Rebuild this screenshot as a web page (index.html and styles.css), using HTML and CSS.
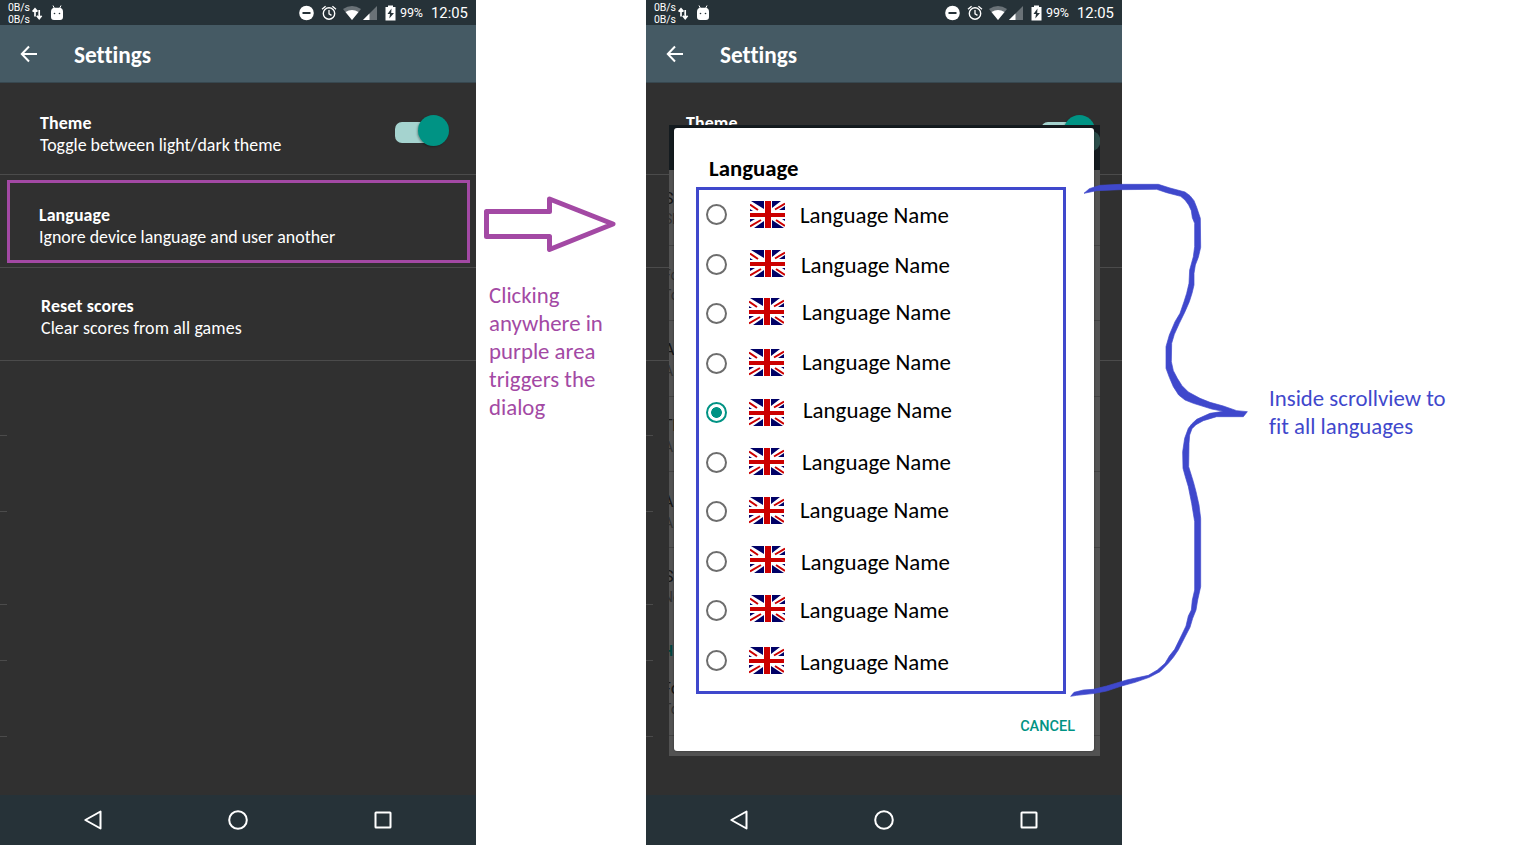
FILE: index.html
```html
<!DOCTYPE html>
<html lang="en">
<head>
<meta charset="utf-8">
<title>Settings – language dialog</title>
<link rel="stylesheet" href="styles.css">
</head>
<body>
<svg class="defs" width="0" height="0" aria-hidden="true">
  <symbol id="left-icons" viewBox="0 0 34 22">
    <path d="M3 14.500V7M.6 9.600L3 6.800l2.400 2.800M7.200 8v8M4.800 13.800l2.400 2.800 2.400-2.800" fill="none" stroke="#fff" stroke-width="1.700"/>
    <path d="M19 9.600h12v5.400q0 3-3 3h-6q-3 0-3-3zM19 9.800q0-4 4-4h4q4 0 4 4z" fill="#fff"/>
    <path d="M21 3.500l1.500 3M29 3.500l-1.500 3" stroke="#fff"/>
    <circle cx="22.500" cy="11.500" r=".8" fill="#263238"/><circle cx="27.500" cy="11.500" r=".8" fill="#263238"/>
  </symbol>
  <symbol id="right-icons" viewBox="0 0 98 18">
    <circle cx="7.500" cy="9" r="7.300" fill="#fff"/><path d="M3.500 9h8" stroke="#263238" stroke-width="2"/>
    <circle cx="30" cy="9.500" r="5.700" fill="none" stroke="#fff" stroke-width="1.400"/>
    <path d="M30 6v3.800l2.500 1.600M23 5.200l3.600-3M37 5.200l-3.600-3" fill="none" stroke="#fff" stroke-width="1.300"/>
    <path d="M44 5q9-6 18 0l-9 11z" fill="#6a7277"/><path d="M46.500 8q6.500-4 13 0L53 16z" fill="#fff"/>
    <path d="M64 16L78 2v14z" fill="#6a7277"/><path d="M64 16l6.500-6.500V16z" fill="#fff"/>
    <path d="M86.500 3h2.500V1.500h5V3h2.500v13.500h-10z" fill="#fff"/><path d="M92.500 4.500L88.500 10h2.500l-.7 4.500L95 9h-2.800z" fill="#263238"/>
  </symbol>
  <symbol id="back" viewBox="0 0 18 18"><path d="M17 9H2M9 1.500L1.800 9 9 16.500" fill="none" stroke="#fff" stroke-width="2"/></symbol>
  <symbol id="nav-back" viewBox="0 0 20 20"><path d="M17.500 1.500v17L2.300 10z" fill="none" stroke="#fff" stroke-width="2" stroke-linejoin="round"/></symbol>
  <symbol id="nav-home" viewBox="0 0 20 20"><circle cx="10" cy="10" r="8.800" fill="none" stroke="#fff" stroke-width="2"/></symbol>
  <symbol id="nav-recent" viewBox="0 0 20 20"><rect x="2.500" y="2.500" width="15" height="15" rx=".5" fill="none" stroke="#fff" stroke-width="2"/></symbol>
  <symbol id="ticks" viewBox="0 0 8 434"><path d="M0 74.500h7M0 150.500h7M0 243.500h7M0 299.500h7M0 375.500h7" stroke="#4b4b4b"/></symbol>
  <symbol id="flag" viewBox="0 0 35 27">
    <path d="M0 0h35v27H0z" fill="#fff"/>
    <path d="M1 0h13v8zM22 0h9l-9 7zM35 5v4h-6zM0 18v3l5-3zM4 27l10-7v7zM22 19l12 8H22zM0 8v2h3zM35 18v2l-3-2z" fill="#006"/>
    <path d="M0 3.500l8 5.500M35 2.500L25 8.500M0 25.500l11-6.500M35 25l-9-6" stroke="#c00" stroke-width="2"/>
    <path d="M18 0v27" stroke="#c00" stroke-width="6"/><path d="M0 14h35" stroke="#c00" stroke-width="4"/>
  </symbol>
</svg>

<main class="board">
  <section class="phone">
    <header class="status">
      <div class="rate">0B/s<br>0B/s</div>
      <svg class="left-icons"><use href="#left-icons"/></svg>
      <svg class="right-icons"><use href="#right-icons"/></svg>
      <span class="battery">99%</span><span class="clock">12:05</span>
    </header>
    <div class="appbar"><svg class="back"><use href="#back"/></svg><h1>Settings</h1></div>
    <div class="list">
      <div class="row first"><div><b>Theme</b><p>Toggle between light/dark theme</p></div><i class="switch"></i></div>
      <div class="row second"><div><b>Language</b><p>Ignore device language and user another</p></div><span class="highlight"></span></div>
      <div class="row third"><div><b>Reset scores</b><p>Clear scores from all games</p></div></div>
      <svg class="ticks"><use href="#ticks"/></svg>
    </div>
    <nav class="navbar"><svg><use href="#nav-back"/></svg><svg><use href="#nav-home"/></svg><svg><use href="#nav-recent"/></svg></nav>
  </section>

  <aside class="step">
    <svg class="arrow" viewBox="0 0 140 60"><path d="M10.500 18.500h63V6L137 31 73.500 56.500v-13h-63z" fill="none" stroke="#a349a4" stroke-width="5" stroke-linejoin="round"/></svg>
    <p>Clicking<br>anywhere in<br>purple area<br>triggers the<br>dialog</p>
  </aside>

  <section class="phone">
    <header class="status">
      <div class="rate">0B/s<br>0B/s</div>
      <svg class="left-icons"><use href="#left-icons"/></svg>
      <svg class="right-icons"><use href="#right-icons"/></svg>
      <span class="battery">99%</span><span class="clock">12:05</span>
    </header>
    <div class="appbar"><svg class="back"><use href="#back"/></svg><h1>Settings</h1></div>
    <div class="list">
      <div class="row first"><div><b>Theme</b></div><i class="switch"></i></div>
      <div class="row second"></div>
      <div class="row third"></div>
      <svg class="ticks"><use href="#ticks"/></svg>
    </div>
    <nav class="navbar"><svg><use href="#nav-back"/></svg><svg><use href="#nav-home"/></svg><svg><use href="#nav-recent"/></svg></nav>

    <div class="shade">
      <svg class="behind" viewBox="0 0 431 631">
        <path d="M0 0h431v45H0z" fill="#141b1f"/>
        <circle cx="421" cy="16" r="10.500" fill="#2b4d4a"/>
        <path d="M0 120.500h431M0 195.500h431M0 271.500h431M0 346.500h431M0 422.500h431M0 610.500h431" stroke="#424242"/>
        <g class="ghost">
          <text x="-5" y="79">S</text><text class="dim" x="-5" y="99">Sh</text>
          <text class="dim" x="-6" y="155">Fo</text><text class="dim" x="-6" y="175">To</text>
          <text x="-5" y="230">A</text><text class="dim" x="-5" y="251">Al</text>
          <text x="-6" y="306">Th</text><text class="dim" x="-5" y="327">Al</text>
          <text x="-6" y="382">A</text><text class="dim" x="-5" y="403">Al</text>
          <text x="-5" y="457">S</text><text class="dim" x="-6" y="477">No</text>
          <text class="teal" x="-6" y="531">H</text>
          <text x="-7" y="569">Fo</text><text class="dim" x="-6" y="589">To</text>
        </g>
      </svg>
      <div class="dialog">
        <h2>Language</h2>
        <ul class="languages">
          <li><i class="radio"></i><svg><use href="#flag"/></svg><span>Language Name</span></li>
          <li><i class="radio"></i><svg><use href="#flag"/></svg><span>Language Name</span></li>
          <li><i class="radio"></i><svg><use href="#flag"/></svg><span>Language Name</span></li>
          <li><i class="radio"></i><svg><use href="#flag"/></svg><span>Language Name</span></li>
          <li><i class="radio on"></i><svg><use href="#flag"/></svg><span>Language Name</span></li>
          <li><i class="radio"></i><svg><use href="#flag"/></svg><span>Language Name</span></li>
          <li><i class="radio"></i><svg><use href="#flag"/></svg><span>Language Name</span></li>
          <li><i class="radio"></i><svg><use href="#flag"/></svg><span>Language Name</span></li>
          <li><i class="radio"></i><svg><use href="#flag"/></svg><span>Language Name</span></li>
          <li><i class="radio"></i><svg><use href="#flag"/></svg><span>Language Name</span></li>
        </ul>
        <button class="cancel">CANCEL</button>
      </div>
    </div>
  </section>

  <aside class="note">Inside scrollview to<br>fit all languages</aside>

  <svg class="brace" viewBox="0 0 600 1620"><path fill="#3f48cc" stroke="#3f48cc" stroke-width="2" stroke-linejoin="round" d="M72 70L88 56 120 46 180 43 295 43 330 54 375 66 390 77 402 92 410 112 421 145 422 232 415 262 406 285 402 310 402 345 396 370 388 395 375 425 358 460 343 493 335 520 334 575 340 602 352 625 366 647 385 666 420 685 450 697 490 708 530 722 562 725 550 740 470 740 430 752 408 764 396 776 389 795 387 820 386 890 400 935 408 965 417 1005 422 1045 422 1250 413 1290 408 1320 398 1345 390 1372 378 1395 355 1440 340 1462 325 1480 300 1505 268 1522 225 1537 185 1548 140 1563 105 1570 50 1576 32 1579 42 1567 70 1560 100 1558 140 1548 200 1530 265 1516 292 1500 315 1480 328 1458 344 1438 365 1395 378 1368 385 1338 394 1320 397 1290 404 1260 404 1055 395 1000 385 950 376 920 369 895 368 845 374 805 385 775 395 762 410 748 450 730 490 724 455 717 400 700 375 690 356 675 340 650 328 622 318 595 318 530 328 495 345 455 360 430 372 395 380 370 387 340 389 300 400 260 404 230 404 160 397 143 394 122 386 105 375 90 362 79 320 68 290 58 180 59 110 62z"/></svg>
</main>
</body>
</html>
```

FILE: styles.css
```css
* { box-sizing: border-box; }
body { margin: 0; background: #fff; font-family: Carlito, Lato, sans-serif; font-variant-ligatures: none; overflow: hidden; }
h1, h2, p, ul { margin: 0; padding: 0; }
svg { display: block; flex: none; }
.defs { position: absolute; }
.board { position: relative; display: flex; width: 1532px; height: 845px; }

.phone { position: relative; display: flex; flex-direction: column; width: 476px; height: 845px; flex: none; background: #303030; color: #fff; }
.status { display: flex; align-items: center; height: 25px; padding: 0 8px; background: #263238; font-family: Roboto, sans-serif; white-space: nowrap; }
.rate { width: 24px; font-size: 10.500px; line-height: 12px; padding-top: 2px; letter-spacing: -.1px; }
.left-icons { width: 34px; height: 22px; }
.right-icons { width: 98px; height: 18px; margin-left: 233px; }
.battery { width: 31px; margin-left: 3px; font-size: 12.500px; letter-spacing: -.1px; }
.clock { font-size: 14.800px; padding-top: 1px; }

.appbar { display: flex; align-items: center; height: 58px; padding-left: 20px; background: #455a64; border-bottom: 1px solid #37474f; }
.back { width: 18px; height: 18px; margin-top: 0; }
.appbar h1 { margin: 2px 0 0 36px; font-size: 23.300px; line-height: 28px; font-weight: 700; }

.list { flex: 1; display: flex; flex-direction: column; }
.row { position: relative; display: flex; justify-content: space-between; height: 93px; padding: 29px 27px 0 39px; border-bottom: 1px solid #4b4b4b; font-size: 17.900px; line-height: 22px; white-space: nowrap; }
.row b { display: block; letter-spacing: .1px; }
.row.first { height: 92px; padding-left: 40px; }
.row.third { padding: 27px 27px 0 41px; }
.row.third p { letter-spacing: .1px; }
.highlight { position: absolute; left: 7px; top: 5px; width: 463px; height: 83px; border: 3px solid #a349a4; }
.switch { position: relative; width: 54px; height: 21px; margin-top: 10px; border-radius: 7px; background: linear-gradient(90deg, #a5d3cf 44px, transparent 44px); }
.switch::after { content: ""; position: absolute; right: 0; top: -7px; width: 31px; height: 31px; border-radius: 50%; background: #009384; box-shadow: -1px 1px 2px rgba(0,0,0,.3); }
.ticks { width: 8px; height: 434px; }
.navbar { display: flex; align-items: center; gap: 125px; height: 50px; padding: 0 0 0 83px; background: #263238; }
.navbar svg { width: 20px; height: 20px; }

.step { width: 170px; padding-top: 193px; flex: none; }
.arrow { width: 140px; height: 60px; }
.step p { margin: 28px 0 0 13px; color: #a349a4; font-size: 22.800px; line-height: 28px; white-space: nowrap; }
.note { padding: 384px 0 0 147px; color: #3f48cc; font-size: 22.800px; line-height: 28px; white-space: nowrap; }

.shade { position: absolute; left: 23px; top: 125px; width: 431px; height: 631px; padding: 3px 6px 5px 5px; background: #525252; }
.behind { position: absolute; left: 0; top: 0; width: 431px; height: 631px; overflow: hidden; }
.ghost { font: 16px Roboto, sans-serif; fill: #151515; }
.ghost .dim { font-size: 14px; fill: #303030; }
.ghost .teal { font-size: 14px; font-weight: 700; fill: #00443d; }
.dialog { position: relative; display: flex; flex-direction: column; height: 623px; padding: 26px 19px 0 22px; border-radius: 3px; background: #fff; color: #000; box-shadow: 0 0 2px rgba(0,0,0,.5); }
.dialog h2 { margin-left: 13px; font-size: 22.800px; line-height: 28px; font-weight: 700; }
.languages { width: 370px; height: 507px; margin-top: 5px; border: 3px solid #3f48cc; list-style: none; }
.languages li { display: flex; align-items: center; height: 49.500px; padding-left: 7px; font-size: 22.900px; line-height: 28px; white-space: nowrap; }
.radio { width: 21px; height: 21px; border: 2px solid #6d6d6d; border-radius: 50%; }
.radio.on { border-color: #009384; background: radial-gradient(circle, #009384 5px, transparent 5.700px); }
.languages svg { width: 35px; height: 27px; margin-left: 22px; }
.languages span { margin-left: 16px; }
.languages li:nth-child(1) svg { transform: translate(1px, 0); }
.languages li:nth-child(2) svg { transform: translate(1px, -1px); }
.languages li:nth-child(3) svg { transform: translateY(-2px); }
.languages li:nth-child(4) svg { transform: translateY(-1px); }
.languages li:nth-child(6) svg, .languages li:nth-child(7) svg { transform: translateY(-1px); }
.languages li:nth-child(8) svg { transform: translate(1px, -2px); }
.languages li:nth-child(9) svg { transform: translate(1px, -2px); }
.languages li:nth-child(2) span { transform: translate(1px, 1px); }
.languages li:nth-child(3) span { transform: translate(2px, -2px); }
.languages li:nth-child(4) span { transform: translate(2px, -1px); }
.languages li:nth-child(5) span { transform: translate(3px, -3px); }
.languages li:nth-child(6) span { transform: translate(2px, 0); }
.languages li:nth-child(7) span { transform: translate(0, -2px); }
.languages li:nth-child(8) span { transform: translate(1px, 1px); }
.languages li:nth-child(9) span { transform: translate(0, -1px); }
.languages li:nth-child(10) span { transform: translate(0, 2px); }
.cancel { align-self: flex-end; margin: 23px 0 0; padding: 0; border: 0; background: none; color: #009384; font: 500 14.500px/20px Roboto, sans-serif; }

.brace { position: absolute; left: 1060px; top: 170px; width: 200px; height: 540px; }
```
